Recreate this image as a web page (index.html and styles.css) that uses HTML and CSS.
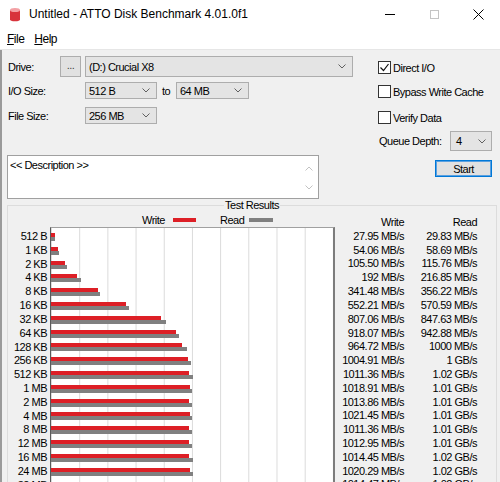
FILE: index.html
```html
<!DOCTYPE html>
<html>
<head>
<meta charset="utf-8">
<title>ATTO Disk Benchmark</title>
<link rel="stylesheet" href="styles.css">
</head>
<body>
<div class="window">
  <div class="titlebar">
    <svg class="app-icon" viewBox="0 0 12 15" width="12" height="15"><path d="M1 3v9.2a5 2 0 0 0 10 0V3z" fill="#d8333b"/><ellipse cx="6" cy="3" rx="5" ry="2" fill="#f3a0a4"/></svg>
    <span class="title">Untitled - ATTO Disk Benchmark 4.01.0f1</span>
    <div class="controls">
      <span class="ctl"><svg width="10" height="10" viewBox="0 0 10 10"><path d="M0 5.5h10" stroke="#000" stroke-width="1"/></svg></span>
      <span class="ctl"><svg width="10" height="10" viewBox="0 0 10 10"><rect x="1.5" y="1.5" width="8" height="8" fill="none" stroke="#c4c4c4" stroke-width="1"/></svg></span>
      <span class="ctl"><svg width="11" height="11" viewBox="0 0 11 11"><path d="M0.5 0.5l10 10M10.5 0.5l-10 10" stroke="#000" stroke-width="1"/></svg></span>
    </div>
  </div>
  <div class="menubar">
    <span class="menu"><u>F</u>ile</span>
    <span class="menu"><u>H</u>elp</span>
  </div>
  <div class="client">
    <div class="top">
      <div class="left">
        <div class="frow drive-row">
          <span class="lbl lbl-drive">Drive:</span>
          <span class="btn dots">...</span>
          <div class="combo drive">(D:) Crucial X8<svg class="chev" width="8" height="5" viewBox="0 0 8 5"><path d="M0.5 0.5L4 4l3.5-3.5" fill="none" stroke="#606060"/></svg></div>
        </div>
        <div class="frow io-row">
          <span class="lbl">I/O Size:</span>
          <div class="combo small">512 B<svg class="chev" width="8" height="5" viewBox="0 0 8 5"><path d="M0.5 0.5L4 4l3.5-3.5" fill="none" stroke="#606060"/></svg></div>
          <span class="to">to</span>
          <div class="combo small wide">64 MB<svg class="chev" width="8" height="5" viewBox="0 0 8 5"><path d="M0.5 0.5L4 4l3.5-3.5" fill="none" stroke="#606060"/></svg></div>
        </div>
        <div class="frow file-row">
          <span class="lbl">File Size:</span>
          <div class="combo small">256 MB<svg class="chev" width="8" height="5" viewBox="0 0 8 5"><path d="M0.5 0.5L4 4l3.5-3.5" fill="none" stroke="#606060"/></svg></div>
        </div>
      </div>
      <div class="right">
        <div class="check c1"><span class="box"><svg width="11" height="11" viewBox="0 0 11 11"><path d="M1.5 5.5l3 3 5-6.5" fill="none" stroke="#111" stroke-width="1.2"/></svg></span>Direct I/O</div>
        <div class="check c2"><span class="box"></span>Bypass Write Cache</div>
        <div class="check c3"><span class="box"></span>Verify Data</div>
        <div class="qd"><span class="qd-lbl">Queue Depth:</span><div class="combo qd-combo">4<svg class="chev" width="8" height="5" viewBox="0 0 8 5"><path d="M0.5 0.5L4 4l3.5-3.5" fill="none" stroke="#606060"/></svg></div></div>
      </div>
    </div>
    <div class="desc-row">
      <div class="desc">
        <span class="desc-text">&lt;&lt; Description &gt;&gt;</span>
        <div class="scroll">
          <svg width="8" height="5" viewBox="0 0 8 5"><path d="M0.5 4.5L4 1l3.5 3.5" fill="none" stroke="#c2c2c2"/></svg>
          <svg width="8" height="5" viewBox="0 0 8 5"><path d="M0.5 0.5L4 4l3.5-3.5" fill="none" stroke="#c2c2c2"/></svg>
        </div>
      </div>
      <span class="start">Start</span>
    </div>
    <fieldset class="results">
      <legend>Test Results</legend>
      <div class="results-body">
        <div class="chart-side">
          <div class="legend-row">
            <span>Write</span><span class="key key-w"></span>
            <span class="read-lbl">Read</span><span class="key key-r"></span>
          </div>
          <div class="plot">
            <div class="labels">
              <div class="lrow">512 B</div>
              <div class="lrow">1 KB</div>
              <div class="lrow">2 KB</div>
              <div class="lrow">4 KB</div>
              <div class="lrow">8 KB</div>
              <div class="lrow">16 KB</div>
              <div class="lrow">32 KB</div>
              <div class="lrow">64 KB</div>
              <div class="lrow">128 KB</div>
              <div class="lrow">256 KB</div>
              <div class="lrow">512 KB</div>
              <div class="lrow">1 MB</div>
              <div class="lrow">2 MB</div>
              <div class="lrow">4 MB</div>
              <div class="lrow">8 MB</div>
              <div class="lrow">12 MB</div>
              <div class="lrow">16 MB</div>
              <div class="lrow">24 MB</div>
              <div class="lrow">32 MB</div>
            </div>
            <div class="chart">
              <div class="brow"><div class="bar w" style="width:3.8px"></div><div class="bar r" style="width:4.1px"></div></div>
              <div class="brow"><div class="bar w" style="width:7.4px"></div><div class="bar r" style="width:8px"></div></div>
              <div class="brow"><div class="bar w" style="width:14.4px"></div><div class="bar r" style="width:15.8px"></div></div>
              <div class="brow"><div class="bar w" style="width:26.2px"></div><div class="bar r" style="width:29.5px"></div></div>
              <div class="brow"><div class="bar w" style="width:46.5px"></div><div class="bar r" style="width:48.5px"></div></div>
              <div class="brow"><div class="bar w" style="width:75.2px"></div><div class="bar r" style="width:77.7px"></div></div>
              <div class="brow"><div class="bar w" style="width:109.9px"></div><div class="bar r" style="width:115.4px"></div></div>
              <div class="brow"><div class="bar w" style="width:125px"></div><div class="bar r" style="width:128.4px"></div></div>
              <div class="brow"><div class="bar w" style="width:131.4px"></div><div class="bar r" style="width:136.2px"></div></div>
              <div class="brow"><div class="bar w" style="width:136.9px"></div><div class="bar r" style="width:139.5px"></div></div>
              <div class="brow"><div class="bar w" style="width:137.7px"></div><div class="bar r" style="width:142.3px"></div></div>
              <div class="brow"><div class="bar w" style="width:138.8px"></div><div class="bar r" style="width:140.9px"></div></div>
              <div class="brow"><div class="bar w" style="width:138.1px"></div><div class="bar r" style="width:140.9px"></div></div>
              <div class="brow"><div class="bar w" style="width:139.1px"></div><div class="bar r" style="width:140.9px"></div></div>
              <div class="brow"><div class="bar w" style="width:137.7px"></div><div class="bar r" style="width:140.9px"></div></div>
              <div class="brow"><div class="bar w" style="width:138px"></div><div class="bar r" style="width:140.9px"></div></div>
              <div class="brow"><div class="bar w" style="width:138.2px"></div><div class="bar r" style="width:142.3px"></div></div>
              <div class="brow"><div class="bar w" style="width:139px"></div><div class="bar r" style="width:142.3px"></div></div>
              <div class="brow"><div class="bar w" style="width:138.2px"></div><div class="bar r" style="width:142.3px"></div></div>
            </div>
          </div>
        </div>
        <div class="values-side">
          <div class="vrow vhead"><span class="vw">Write</span><span class="vr">Read</span></div>
          <div class="vrow"><span class="vw">27.95 MB/s</span><span class="vr">29.83 MB/s</span></div>
          <div class="vrow"><span class="vw">54.06 MB/s</span><span class="vr">58.69 MB/s</span></div>
          <div class="vrow"><span class="vw">105.50 MB/s</span><span class="vr">115.76 MB/s</span></div>
          <div class="vrow"><span class="vw">192 MB/s</span><span class="vr">216.85 MB/s</span></div>
          <div class="vrow"><span class="vw">341.48 MB/s</span><span class="vr">356.22 MB/s</span></div>
          <div class="vrow"><span class="vw">552.21 MB/s</span><span class="vr">570.59 MB/s</span></div>
          <div class="vrow"><span class="vw">807.06 MB/s</span><span class="vr">847.63 MB/s</span></div>
          <div class="vrow"><span class="vw">918.07 MB/s</span><span class="vr">942.88 MB/s</span></div>
          <div class="vrow"><span class="vw">964.72 MB/s</span><span class="vr">1000 MB/s</span></div>
          <div class="vrow"><span class="vw">1004.91 MB/s</span><span class="vr">1 GB/s</span></div>
          <div class="vrow"><span class="vw">1011.36 MB/s</span><span class="vr">1.02 GB/s</span></div>
          <div class="vrow"><span class="vw">1018.91 MB/s</span><span class="vr">1.01 GB/s</span></div>
          <div class="vrow"><span class="vw">1013.86 MB/s</span><span class="vr">1.01 GB/s</span></div>
          <div class="vrow"><span class="vw">1021.45 MB/s</span><span class="vr">1.01 GB/s</span></div>
          <div class="vrow"><span class="vw">1011.36 MB/s</span><span class="vr">1.01 GB/s</span></div>
          <div class="vrow"><span class="vw">1012.95 MB/s</span><span class="vr">1.01 GB/s</span></div>
          <div class="vrow"><span class="vw">1014.45 MB/s</span><span class="vr">1.02 GB/s</span></div>
          <div class="vrow"><span class="vw">1020.29 MB/s</span><span class="vr">1.02 GB/s</span></div>
          <div class="vrow"><span class="vw">1014.47 MB/s</span><span class="vr">1.02 GB/s</span></div>
        </div>
      </div>
    </fieldset>
  </div>
</div>
</body>
</html>
```
FILE: styles.css
```css
* { box-sizing: border-box; }
html, body { margin: 0; padding: 0; }
body {
  width: 500px;
  height: 482px;
  overflow: hidden;
  background: #f0f0f0;
  font-family: "Liberation Sans", Arial, sans-serif;
  font-size: 11px;
  letter-spacing: -0.5px;
  color: #000;
}
.window {
  width: 500px;
  height: 482px;
  overflow: hidden;
  display: flex;
  flex-direction: column;
}
.titlebar {
  height: 28px;
  flex: none;
  background: #fff;
  display: flex;
  align-items: center;
}
.app-icon { margin-left: 9px; margin-right: 8px; flex: none; }
.title { font-size: 12px; letter-spacing: 0; }
.controls { margin-left: auto; display: flex; height: 28px; }
.ctl { width: 44px; display: flex; align-items: center; justify-content: center; }

.menubar {
  height: 21px;
  flex: none;
  background: #fff;
  display: flex;
  align-items: center;
  padding-left: 7px;
  font-size: 12px;
}
.menu { margin-right: 10px; }

.client {
  flex: 1;
  background: #f0f0f0;
  border-top: 1px solid #e6e6e6;
  box-shadow: inset 2px 0 0 #9a9a9a;
}
.top { display: flex; align-items: flex-start; padding-top: 6px; }
.left { margin-left: 8px; width: 345px; }
.frow { display: flex; align-items: center; }
.drive-row { height: 21px; }
.io-row { height: 17px; margin-top: 5px; }
.file-row { height: 17px; margin-top: 8px; }
.lbl { width: 77px; flex: none; }
.lbl-drive { width: 52px; }
.btn {
  display: flex;
  align-items: center;
  justify-content: center;
  background: #e1e1e1;
  border: 1px solid #adadad;
}
.dots { width: 21px; height: 21px; padding-bottom: 3px; color: #444; }
.combo {
  display: flex;
  align-items: center;
  background: #e4e4e4;
  border: 1px solid #adadad;
  padding-left: 3px;
}
.combo .chev { margin-left: auto; margin-right: 6px; }
.drive { width: 268px; height: 21px; margin-left: 4px; }
.small { width: 72px; height: 17px; }
.wide { width: 73px; }
.to { width: 14px; margin-left: 5px; }

.right { margin-left: 25px; padding-top: 5px; }
.check { display: flex; align-items: center; height: 13px; }
.c2 { margin-top: 11px; }
.c3 { margin-top: 13px; }
.box {
  width: 13px;
  height: 13px;
  border: 1px solid #333;
  background: #fff;
  margin-right: 2px;
  display: flex;
  align-items: center;
  justify-content: center;
  flex: none;
}
.qd { display: flex; align-items: center; margin-top: 7px; height: 20px; }
.qd-lbl { width: 72px; padding-left: 1px; }
.qd-combo { width: 42px; height: 20px; padding-left: 5px; }
.qd-combo .chev { margin-right: 5px; }

.desc-row { display: flex; align-items: flex-start; margin-top: 4px; }
.desc {
  margin-left: 7px;
  width: 312px;
  height: 44px;
  background: #fff;
  border: 1px solid #a0a0a0;
  display: flex;
}
.desc-text { padding: 3px 0 0 2px; line-height: 13px; }
.scroll {
  margin-left: auto;
  width: 17px;
  display: flex;
  flex-direction: column;
  justify-content: space-between;
  align-items: center;
  padding: 10px 2px 8px 0;
}
.start {
  margin-left: auto;
  margin-right: 8px;
  margin-top: 5px;
  width: 57px;
  height: 17px;
  background: #e1e1e1;
  border: 1px solid #0078d7;
  box-shadow: inset 0 0 0 1px #5aa0e0;
  display: flex;
  align-items: center;
  justify-content: center;
}

.results {
  margin: 0 3px 0 7px;
  padding: 0;
  border: 1px solid #dcdcdc;
  min-width: 0;
}
.results legend {
  margin: 0 auto;
  padding: 0 1px;
  line-height: 13px;
}
.results-body { display: flex; align-items: flex-start; }
.chart-side { width: 327px; flex: none; }
.legend-row {
  height: 15px;
  display: flex;
  align-items: center;
  padding-left: 134px;
}
.key { width: 23px; height: 4px; margin-left: 8px; }
.key-w { background: #dd1f26; }
.key-r { background: #808080; margin-left: 5px; width: 24px; }
.read-lbl { margin-left: 24px; }
.plot { display: flex; }
.labels { width: 39px; margin-right: 3px; padding-top: 3px; }
.lrow { height: 13.82px; line-height: 13.82px; text-align: right; }
.chart {
  width: 285px;
  height: 300px;
  border-left: 1px solid #5a5a5a;
  border-top: 1px solid #a0a0a0;
  border-right: 2px solid #7c7c7c;
  background-color: #fff;
  background-image: linear-gradient(to right, #dadada 1px, transparent 1px);
  background-size: 28.2px 100%;
  padding-top: 2px;
}
.brow {
  height: 13.82px;
  display: flex;
  flex-direction: column;
  justify-content: center;
}
.bar { height: 4px; flex: none; }
.bar.w { background: #dd1f26; }
.bar.r { background: #808080; }

.values-side { padding-top: 4px; }
.vrow { display: flex; height: 13.82px; line-height: 13.82px; }
.vw { width: 69px; text-align: right; }
.vr { width: 73px; text-align: right; }
```
